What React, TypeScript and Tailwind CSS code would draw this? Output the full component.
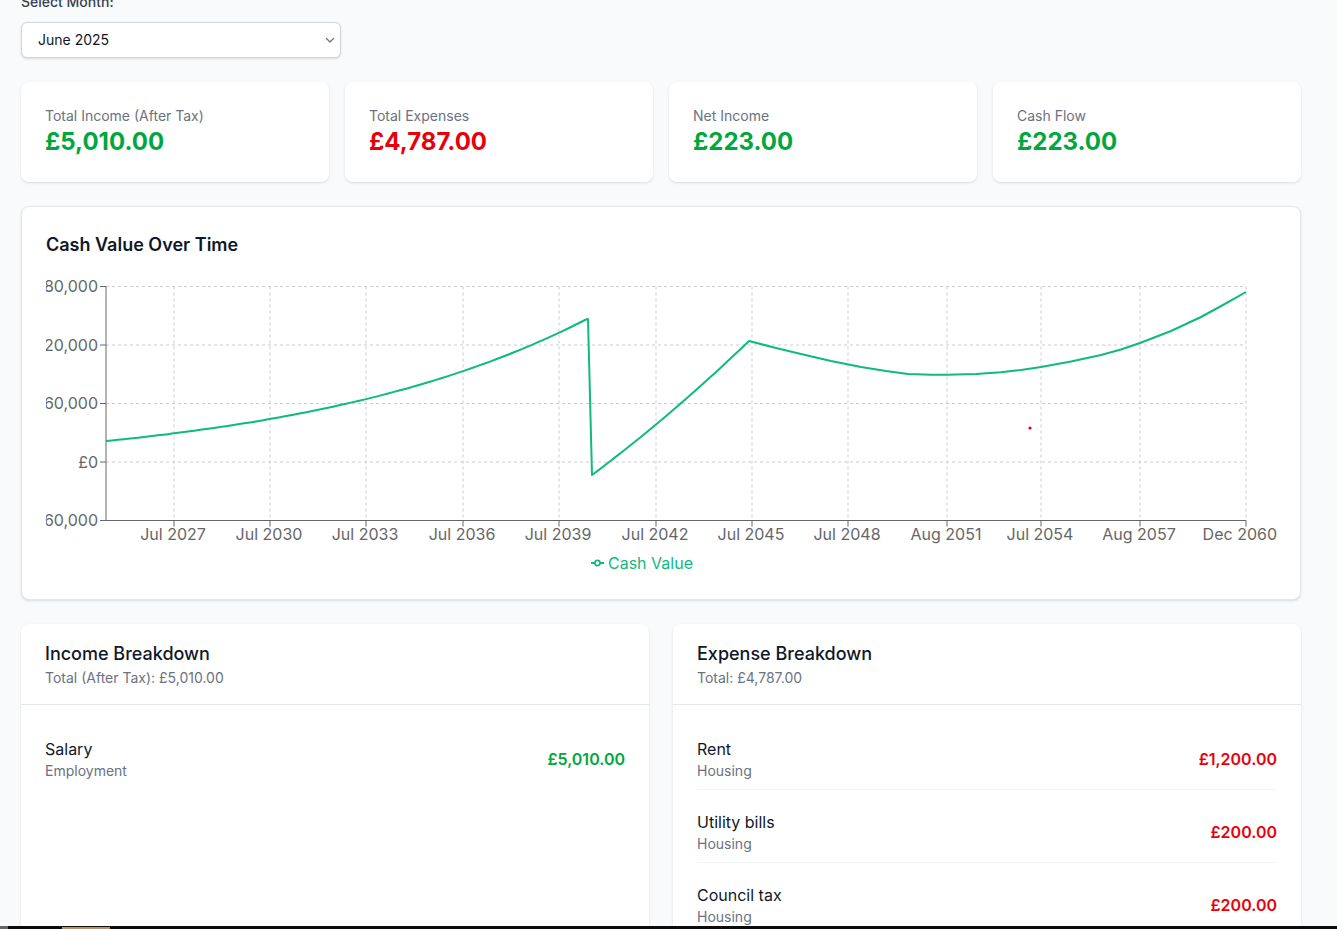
import React from "react";

const X0 = 45; // svg page offset x
const Y0 = 275; // svg page offset y

function yv(v: number) {
  return 187 - (v / 60) * 58.5;
}

function buildPath(): string {
  const pts: [number, number][] = [];
  for (let x = 105; x <= 587; x += 6) {
    const t = x - 105;
    const v = 30.3 * Math.exp(0.0034 * t) - 8.8;
    pts.push([x, 462 - v * 0.975]);
  }
  pts.push([587, 319]);
  pts.push([591, 475]);
  for (let i = 1; i <= 20; i++) {
    const s = i / 20;
    const x = (1 - s) * (1 - s) * 591 + 2 * (1 - s) * s * 670 + s * s * 748;
    const y = (1 - s) * (1 - s) * 475 + 2 * (1 - s) * s * 416 + s * s * 341;
    pts.push([x, y]);
  }
  const tail: [number, number][] = [
    [775, 348],
    [800, 354],
    [830, 361],
    [860, 367],
    [885, 371],
    [907, 374],
    [930, 374.8],
    [946, 374.8],
    [975, 374],
    [1000, 372.3],
    [1020, 370],
    [1040, 367],
    [1070, 361.5],
    [1100, 355],
    [1120, 349.5],
    [1139, 343],
    [1170, 331],
    [1200, 317],
    [1222, 305],
    [1245, 292],
  ];
  pts.push(...tail);
  return pts
    .map((p, i) => `${i === 0 ? "M" : "L"}${(p[0] - X0).toFixed(1)},${(p[1] - Y0).toFixed(1)}`)
    .join(" ");
}

const xTicks: [number, string][] = [
  [128, "Jul 2027"],
  [224, "Jul 2030"],
  [320, "Jul 2033"],
  [417, "Jul 2036"],
  [513, "Jul 2039"],
  [610, "Jul 2042"],
  [706, "Jul 2045"],
  [802, "Jul 2048"],
  [901, "Aug 2051"],
  [995, "Jul 2054"],
  [1094, "Aug 2057"],
  [1200, "Dec 2060"],
];

const yTicks: [number, string][] = [
  [180, "£180,000"],
  [120, "£120,000"],
  [60, "£60,000"],
  [0, "£0"],
  [-60, "-£60,000"],
];

function CashChart() {
  const left = 60;
  const right = 1200;
  const top = yv(180);
  const bottom = yv(-60);
  const d = buildPath();
  return (
    <svg width="1231" height="300" className="block overflow-hidden" style={{ fontFamily: "Inter, sans-serif" }}>
      {yTicks.slice(0, 4).map(([v]) => (
        <line key={"h" + v} x1={left} x2={right} y1={yv(v)} y2={yv(v)} stroke="#ccc" strokeDasharray="3 3" />
      ))}
      {xTicks.map(([x]) => (
        <line key={"v" + x} x1={x} x2={x} y1={top} y2={bottom} stroke="#ccc" strokeDasharray="3 3" />
      ))}
      <line x1={left} x2={left} y1={top} y2={bottom} stroke="#666" />
      <line x1={left} x2={right} y1={bottom} y2={bottom} stroke="#666" />
      {yTicks.map(([v, label]) => (
        <g key={"yt" + v}>
          <line x1={left - 6} x2={left} y1={yv(v)} y2={yv(v)} stroke="#666" />
          <text x={left - 8} y={yv(v) + 5.5} textAnchor="end" fill="#666" fontSize="16">
            {label}
          </text>
        </g>
      ))}
      {xTicks.map(([x, label], i) => (
        <g key={"xt" + x}>
          <line x1={x} x2={x} y1={bottom} y2={bottom + 6} stroke="#666" />
          {i === xTicks.length - 1 ? (
            <text x={1231} y={265} textAnchor="end" fill="#666" fontSize="16">
              {label}
            </text>
          ) : (
            <text x={x - 1} y={265} textAnchor="middle" fill="#666" fontSize="16">
              {label}
            </text>
          )}
        </g>
      ))}
      <path d={d} fill="none" stroke="#10b981" strokeWidth="2" strokeLinejoin="round" />
      <circle cx={984} cy={153} r={1.6} fill="#e7000b" />
      <g>
        <line x1={545} x2={558} y1={288} y2={288} stroke="#10b981" strokeWidth="2" />
        <circle cx={551.5} cy={288} r={2.6} fill="#fff" stroke="#10b981" strokeWidth="1.6" />
        <text x={562} y={294} fill="#10b981" fontSize="16">
          Cash Value
        </text>
      </g>
    </svg>
  );
}

function StatCard({ label, value, color }: { label: string; value: string; color: string }) {
  return (
    <div className="rounded-lg bg-white p-6 shadow-[0_1px_3px_0_rgba(0,0,0,0.1),0_1px_2px_-1px_rgba(0,0,0,0.1)]">
      <div className="text-sm leading-5 text-gray-500">{label}</div>
      <div className={`text-2xl font-bold leading-8 ${color}`}>{value}</div>
    </div>
  );
}

function Row({ name, cat, amount, color, last }: { name: string; cat: string; amount: string; color: string; last?: boolean }) {
  return (
    <div className={`flex items-center justify-between pt-5 pb-2 ${last ? "" : "border-b border-gray-100"}`}>
      <div>
        <div className="text-base leading-6 text-gray-900">{name}</div>
        <div className="text-sm leading-5 text-gray-500">{cat}</div>
      </div>
      <div className={`text-base font-semibold ${color}`}>{amount}</div>
    </div>
  );
}

export default function App() {
  return (
    <div className="min-h-screen overflow-hidden bg-gray-50" style={{ fontFamily: "Inter, 'Noto Sans', sans-serif" }}>
      <div className="w-[1280px] pl-[21px] box-content">
        <div className="mt-[-8px] mb-6">
          <div className="mb-[10px] text-sm font-medium leading-5 text-gray-700">Select Month:</div>
          <div className="relative w-80">
            <select
              defaultValue="2025-06"
              className="block h-9 w-80 appearance-none rounded-md border border-gray-300 bg-white pl-4 pr-8 text-sm text-gray-900 shadow-sm"
            >
              <option value="2025-06">June 2025</option>
              <option value="2025-07">July 2025</option>
            </select>
            <svg
              className="pointer-events-none absolute right-[6px] top-[15px]"
              width="10"
              height="7"
              viewBox="0 0 10 7"
              fill="none"
            >
              <path d="M1.5 1.5 L5 5 L8.5 1.5" stroke="#6b7280" strokeWidth="1.3" strokeLinecap="round" strokeLinejoin="round" />
            </svg>
          </div>
        </div>

        <div className="mb-6 grid grid-cols-4 gap-4">
          <StatCard label="Total Income (After Tax)" value="£5,010.00" color="text-green-600" />
          <StatCard label="Total Expenses" value="£4,787.00" color="text-red-600" />
          <StatCard label="Net Income" value="£223.00" color="text-green-600" />
          <StatCard label="Cash Flow" value="£223.00" color="text-green-600" />
        </div>

        <div className="mb-6 rounded-lg border border-gray-200 bg-white p-6 shadow-sm">
          <h2 className="mb-4 text-lg font-semibold leading-7 text-gray-900">Cash Value Over Time</h2>
          <CashChart />
        </div>

        <div className="grid grid-cols-2 gap-6">
          <div className="h-[400px] overflow-hidden rounded-lg bg-white shadow-sm">
            <div className="border-b border-gray-200 px-6 pt-4 pb-4">
              <h3 className="text-lg font-medium leading-7 text-gray-900">Income Breakdown</h3>
              <p className="text-sm leading-5 text-gray-500">Total (After Tax): £5,010.00</p>
            </div>
            <div className="px-6 py-3">
              <Row name="Salary" cat="Employment" amount="£5,010.00" color="text-green-600" last />
            </div>
          </div>
          <div className="h-[400px] overflow-hidden rounded-lg bg-white shadow-sm">
            <div className="border-b border-gray-200 px-6 pt-4 pb-4">
              <h3 className="text-lg font-medium leading-7 text-gray-900">Expense Breakdown</h3>
              <p className="text-sm leading-5 text-gray-500">Total: £4,787.00</p>
            </div>
            <div className="px-6 py-3">
              <Row name="Rent" cat="Housing" amount="£1,200.00" color="text-red-600" />
              <Row name="Utility bills" cat="Housing" amount="£200.00" color="text-red-600" />
              <Row name="Council tax" cat="Housing" amount="£200.00" color="text-red-600" />
              <Row name="Groceries" cat="Food" amount="£400.00" color="text-red-600" last />
            </div>
          </div>
        </div>
      </div>

      <div className="fixed bottom-0 left-0 right-0 flex h-[3px] bg-[#0b0b0b]">
        <div className="h-full w-[8px] bg-[#666]" />
        <div className="ml-[54px] mt-[1px] h-[2px] w-[48px] bg-[#d08a4a]" />
      </div>
    </div>
  );
}
